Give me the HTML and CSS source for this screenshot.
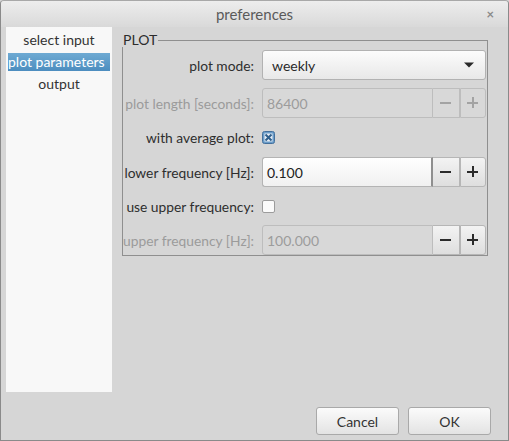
FILE: index.html
```html
<!DOCTYPE html>
<html>
<head>
<meta charset="utf-8">
<link rel="stylesheet" href="styles.css">
</head>
<body>
<div class="window">
  <div class="titlebar">
    <span class="title">preferences</span>
    <span class="close">×</span>
  </div>
  <div class="main">
    <ul class="list">
      <li class="item">select input</li>
      <li class="item sel">plot parameters</li>
      <li class="item">output</li>
    </ul>
    <div class="group">
      <div class="group-head"><span class="group-title">PLOT</span><span class="group-line"></span></div>
      <div class="group-body">
        <div class="label">plot mode:</div>
        <div class="combo"><span>weekly</span>
          <svg class="arrow" width="10" height="6" viewBox="0 0 10 6"><path d="M0 0.5 H10 L5 5.5 Z" fill="#2a2a2a"/></svg>
        </div>

        <div class="label dis">plot length [seconds]:</div>
        <div class="spin">
          <div class="spin-field dis">86400</div>
          <div class="spin-btn minus dis"><span class="g-h"></span></div>
          <div class="spin-btn plus dis"><span class="g-h"></span><span class="g-v"></span></div>
        </div>

        <div class="label">with average plot:</div>
        <div class="cbcell">
          <svg class="cb" width="13" height="13" viewBox="0 0 13 13">
            <rect x="0.5" y="0.5" width="12" height="12" rx="2" fill="#6a9cc9" stroke="#44709c"/>
            <rect x="2.5" y="2.5" width="8" height="8" fill="#e8eef5"/>
            <path d="M3.5 3.5 L9.5 9.5 M9.5 3.5 L3.5 9.5" stroke="#2f5f8c" stroke-width="2"/>
          </svg>
        </div>

        <div class="label">lower frequency [Hz]:</div>
        <div class="spin">
          <div class="spin-field on">0.100</div>
          <div class="spin-btn minus"><span class="g-h"></span></div>
          <div class="spin-btn plus"><span class="g-h"></span><span class="g-v"></span></div>
        </div>

        <div class="label">use upper frequency:</div>
        <div class="cbcell">
          <span class="cb-empty"></span>
        </div>

        <div class="label dis">upper frequency [Hz]:</div>
        <div class="spin">
          <div class="spin-field dis">100.000</div>
          <div class="spin-btn minus"><span class="g-h"></span></div>
          <div class="spin-btn plus"><span class="g-h"></span><span class="g-v"></span></div>
        </div>
      </div>
    </div>
  </div>
  <div class="footer">
    <button class="btn">Cancel</button>
    <button class="btn">OK</button>
  </div>
</div>
</body>
</html>
```
FILE: styles.css
```css
* { box-sizing: border-box; }
html, body { margin: 0; padding: 0; background: #d6d6d6; }
body { font-family: Lato, "Noto Sans", sans-serif; font-size: 14px; color: #333; }

.window {
  width: 509px;
  height: 441px;
  background: #d6d6d6;
  border: 1px solid #8a8a8a;
  border-top-color: #a8a8a8;
  border-radius: 4px 4px 0 0;
  display: flex;
  flex-direction: column;
  overflow: hidden;
}

.titlebar {
  height: 26px;
  flex: none;
  background: linear-gradient(#ededed, #d9d9d9);
  display: flex;
  align-items: center;
  justify-content: center;
  position: relative;
}
.title { color: #5a5a5a; font-size: 15px; }
.close {
  position: absolute;
  right: 14px;
  top: 5px;
  color: #8a8a8a;
  font-size: 13px;
  font-weight: bold;
}

.main {
  display: flex;
  height: 365px;
  padding-left: 5px;
  flex: none;
}

.list {
  list-style: none;
  margin: 0;
  padding: 4px 0 0 0;
  width: 106px;
  height: 365px;
  background: #f8f8f8;
}
.item {
  height: 18px;
  line-height: 18px;
  margin: 0 2px 4px 2px;
  text-align: center;
  color: #333;
  white-space: nowrap;
}
.item.sel {
  background: linear-gradient(#6eaad3, #4c8dbf);
  color: #fff;
  text-align: left;
}

.group {
  margin-left: 10px;
  margin-top: 6px;
  width: 366px;
}
.group-head {
  display: flex;
  height: 14px;
}
.group-title {
  line-height: 14px;
  color: #2c2c2c;
  padding-left: 1px;
}
.group-line {
  flex: 1;
  margin-top: 7px;
  margin-left: 1px;
  border-top: 1px solid #8f8f8f;
  border-right: 1px solid #8f8f8f;
}
.group-body {
  border: 1px solid #8f8f8f;
  border-top: 0;
  padding: 3px 1px 0 0;
  display: grid;
  grid-template-columns: 131px 224px;
  grid-template-rows: 30px 30px 23px 30px 22px 30px;
  column-gap: 8px;
  row-gap: 8px;
}

.label {
  align-self: center;
  text-align: right;
  white-space: nowrap;
  color: #2e2e2e;
  font-size: 13.8px;
}
.label.dis { color: #9b9b9b; }

.combo {
  border: 1px solid #b2b2b2;
  border-radius: 3px;
  background: linear-gradient(#fcfcfc, #e8e8e8);
  display: flex;
  align-items: center;
  justify-content: space-between;
  padding: 0 11px 0 9px;
  color: #2a2a2a;
}

.spin { display: flex; height: 30px; }
.spin-field {
  width: 171px;
  border: 1px solid #b4b4b4;
  border-radius: 3px 0 0 3px;
  padding-left: 4px;
  display: flex;
  align-items: center;
}
.spin-field.on {
  background: linear-gradient(#ffffff, #f1f1f1);
  color: #222;
  border-right: 2px solid #8f8f8f;
}
.spin-field.dis {
  background: #d8d8d8;
  color: #9c9c9c;
  border-color: #bdbdbd;
}
.spin-btn {
  position: relative;
  border: 1px solid #b6b6b6;
  border-left: 0;
  background: linear-gradient(#f3f3f3, #dedede);
}
.spin-btn.minus { width: 27px; }
.spin-btn.plus { width: 26px; border-left: 1px solid #b6b6b6; border-radius: 0 3px 3px 0; }
.spin-btn.dis { background: #d8d8d8; border-color: #bdbdbd; }
.g-h, .g-v { position: absolute; background: #2b2b2b; }
.g-h { width: 11px; height: 2px; left: 50%; top: 50%; margin: -1px 0 0 -6px; }
.g-v { width: 2px; height: 11px; left: 50%; top: 50%; margin: -6px 0 0 -1.5px; }
.spin-btn.dis .g-h, .spin-btn.dis .g-v { background: #a3a3a3; }

.cbcell { display: flex; align-items: center; }
.cb { display: block; }
.cb-empty {
  display: block;
  width: 13px;
  height: 13px;
  border: 1px solid #9c9c9c;
  border-radius: 2px;
  background: #fbfbfb;
}

.footer {
  display: flex;
  justify-content: flex-end;
  gap: 9px;
  margin-top: 15px;
  padding-right: 17px;
}
.btn {
  width: 83px;
  height: 28px;
  border: 1px solid #a9a9a9;
  border-radius: 3px;
  background: linear-gradient(#fbfbfb, #e3e3e3);
  font-family: Lato, "Noto Sans", sans-serif;
  font-size: 14px;
  color: #333;
  padding: 0;
}
```
